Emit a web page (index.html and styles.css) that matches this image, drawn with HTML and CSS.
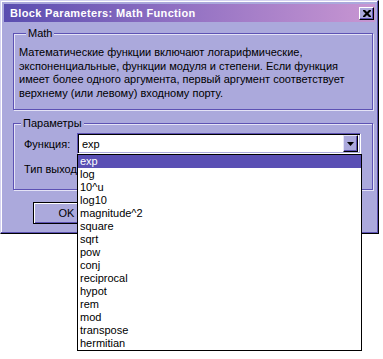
FILE: index.html
```html
<!DOCTYPE html>
<html lang="ru">
<head>
  <meta charset="UTF-8">
  <title>Block Parameters: Math Function</title>
  <link rel="stylesheet" href="styles.css">
</head>
<body>
  <div class="window">
    <div class="titlebar">
      <span class="title">Block Parameters: Math Function</span>
      <button class="close-btn">
        <svg width="8" height="7" viewBox="0 0 8 7">
          <path d="M0 0h2l2 2 2-2h2v1l-2.5 2.5L8 6v1H6L4 5 2 7H0V6l2.5-2.5L0 1z" fill="#000"/>
        </svg>
      </button>
    </div>

    <div class="content">
      <div class="group group-math">
        <div class="group-title">Math</div>
        <p class="desc">Математические функции включают логарифмические, экспоненциальные, функции модуля и степени. Если функция имеет более одного аргумента, первый аргумент соответствует верхнему (или левому) входному порту.</p>
      </div>

      <div class="group group-params">
        <div class="group-title">Параметры</div>
        <div class="group-body">
          <div class="row">
            <label class="row-label">Функция:</label>
            <div class="combo">
              <div class="combo-field">
                <span class="combo-value">exp</span>
                <span class="combo-arrow">
                  <svg width="7" height="4" viewBox="0 0 7 4"><path d="M0 0h7L3.5 4z" fill="#000"/></svg>
                </span>
              </div>
              <ul class="dropdown">
                <li class="selected">exp</li>
                <li>log</li>
                <li>10^u</li>
                <li>log10</li>
                <li>magnitude^2</li>
                <li>square</li>
                <li>sqrt</li>
                <li>pow</li>
                <li>conj</li>
                <li>reciprocal</li>
                <li>hypot</li>
                <li>rem</li>
                <li>mod</li>
                <li>transpose</li>
                <li>hermitian</li>
              </ul>
            </div>
          </div>
          <div class="row row-type">
            <label class="row-label">Тип выход</label>
          </div>
        </div>
      </div>

      <div class="buttons">
        <button class="btn btn-default">OK</button>
      </div>
    </div>
  </div>
</body>
</html>
```

FILE: styles.css
```css
html,
body {
  min-height: 359px;
}
body {
  margin: 0;
  background: #fff;
  font-family: "Liberation Sans", Arial, sans-serif;
  font-size: 11px;
  color: #000;
}
.window {
  width: 379px;
  height: 234px;
  box-sizing: border-box;
  padding: 3px;
  background: #aba9dc;
  border: 1px solid;
  border-color: #d4d2f0 #000 #000 #d4d2f0;
  box-shadow: inset -1px -1px #5d52b4, inset 1px 1px #fff;
}
.titlebar {
  height: 18px;
  display: flex;
  align-items: center;
  justify-content: space-between;
  padding: 0 1px 0 6px;
  background: linear-gradient(to right, #5a4db0, #8f6fc2 45%, #c896d2);
}
.title {
  color: #fff;
  font-weight: bold;
  font-size: 11px;
  letter-spacing: 0.35px;
}
.close-btn {
  width: 15px;
  height: 13px;
  padding: 0;
  display: flex;
  align-items: center;
  justify-content: center;
  background: #aba9dc;
  border: 1px solid;
  border-color: #fff #000 #000 #fff;
  box-shadow: inset -1px -1px #5d52b4;
}
.content {
  padding: 11px 0 0 9px;
}
.group {
  width: 360px;
  box-sizing: border-box;
  border: 1px solid #5d52b4;
  box-shadow: inset 1px 1px #e4e3f6, 1px 1px #e4e3f6;
}
.group-title {
  display: table;
  margin: -7px 0 0 7px;
  padding: 0 2px;
  background: #aba9dc;
  line-height: 13px;
}
.group-math {
  height: 77px;
  padding: 0 5px;
}
.desc {
  margin: 6px 0 0;
  line-height: 13.5px;
  width: 330px;
}
.group-params {
  height: 67px;
  margin-top: 13px;
}
.group-body {
  padding: 3px 10px 0;
}
.row {
  display: flex;
  align-items: center;
  height: 21px;
}
.row-type {
  margin-top: 4px;
}
.row-label {
  width: 53px;
  flex-shrink: 0;
  white-space: nowrap;
}
.combo {
  position: relative;
  width: 284px;
}
.combo-field {
  height: 21px;
  box-sizing: border-box;
  display: flex;
  align-items: center;
  background: #fff;
  border: 1px solid;
  border-color: #5d52b4 #fff #fff #5d52b4;
  box-shadow: inset 1px 1px #000, inset -1px -1px #aba9dc;
  padding: 2px 2px 2px 4px;
}
.combo-value {
  flex: 1;
}
.combo-arrow {
  width: 15px;
  height: 17px;
  box-sizing: border-box;
  display: flex;
  align-items: center;
  justify-content: center;
  background: #aba9dc;
  border: 1px solid;
  border-color: #e4e3f6 #000 #000 #e4e3f6;
  box-shadow: inset -1px -1px #5d52b4;
}
.dropdown {
  position: absolute;
  top: 100%;
  left: 0;
  z-index: 2;
  width: 285px;
  box-sizing: border-box;
  margin: 0;
  padding: 0;
  list-style: none;
  background: #fff;
  border: 1px solid #000;
}
.dropdown li {
  height: 13px;
  line-height: 13px;
  padding-left: 2px;
}
.dropdown li.selected {
  background: #5a4fb4;
  color: #fff;
}
.buttons {
  display: flex;
  margin-top: 12px;
  padding-left: 20px;
}
.btn {
  width: 75px;
  height: 22px;
  padding: 0 8px 0 0;
  font-family: inherit;
  font-size: 11px;
  background: #aba9dc;
  border: 1px solid #000;
  box-shadow: inset 1px 1px #fff, inset -1px -1px #5d52b4;
}
```
